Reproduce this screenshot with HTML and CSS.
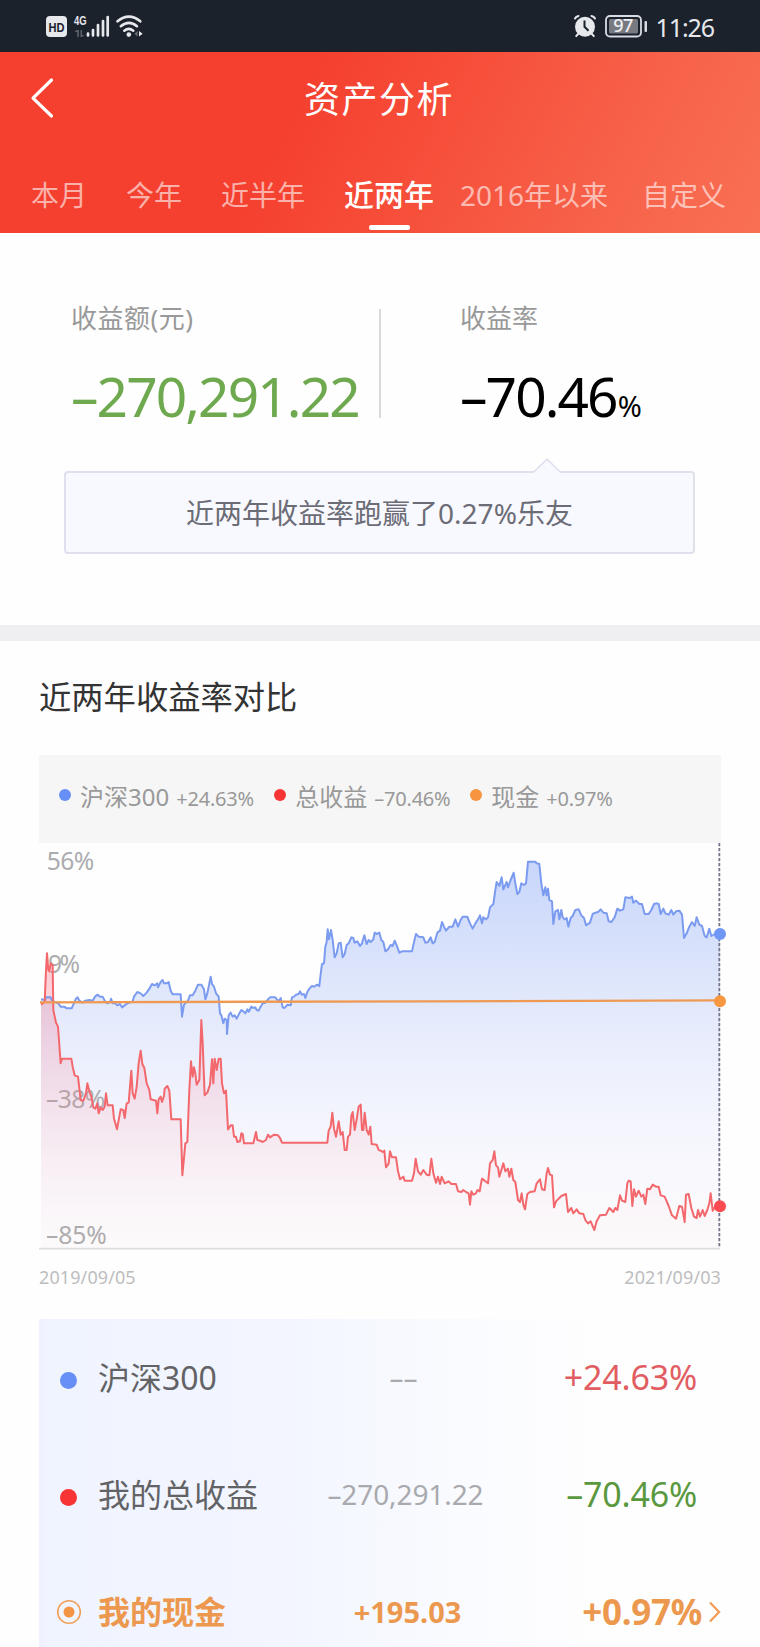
FILE: index.html
```html
<!DOCTYPE html>
<html lang="zh-CN">
<head>
<meta charset="utf-8">
<title>资产分析</title>
<link rel="stylesheet" href="styles.css">
</head>
<body>
<div class="status">
  <svg class="status-left" width="110" height="52" viewBox="40 0 110 52">
    <rect x="46" y="16" width="21" height="21" rx="4" fill="#e6e8ec"/>
    <text class="hd" x="56.5" y="32" text-anchor="middle" textLength="16" lengthAdjust="spacingAndGlyphs">HD</text>
    <text class="net" x="74" y="25" textLength="12.5" lengthAdjust="spacingAndGlyphs">4G</text>
    <path d="M76.3 30l2.6 0v7h-1.700v-5h-2.500zM80.500 30h1.500v5h2.500l-2.500 2h-1.500z" fill="#596069"/>
    <path d="M88 33.500v2M93 30v5.500M98 25v10.500M103 21v14.500M107.700 17v18.500" stroke="#e6e8ec" stroke-width="2.700" stroke-linecap="round"/>
    <g fill="none" stroke="#e6e8ec" stroke-width="2.600" stroke-linecap="round">
      <path d="M117.500 21.300q11.500-9.500 22.800 0M120.800 26.200q8.200-6.800 16.200 0M124.300 30.700q4.500-3.700 9 0"/>
    </g>
    <circle cx="128.800" cy="34.600" r="2.300" fill="#e6e8ec"/>
    <path d="M137.500 31v5.500l-3-2.700z" fill="#6b7179"/><path d="M139 31v5.500l3.700-2.700z" fill="#e6e8ec"/>
  </svg>
  <div class="status-right">
    <svg width="24" height="24" viewBox="572 14 24 24">
      <circle cx="584" cy="26.800" r="10" fill="#e6e8ec"/>
      <path d="M574 18.500q1-2 3.500-2.500M594 18.500q-1-2-3.500-2.500M577.500 33.500l-2.300 2.600M590.500 33.500l2.300 2.600" stroke="#e6e8ec" stroke-width="2" stroke-linecap="round" fill="none"/>
      <path d="M583.500 20.500v6.300l4 4" stroke="#1b222c" stroke-width="2" fill="none"/>
    </svg>
    <svg class="battery" width="44" height="24" viewBox="603 14 44 24">
      <rect x="605" y="16" width="35" height="20.500" rx="4" fill="none" stroke="#d9dbe2" stroke-width="1.800"/>
      <rect x="608" y="19" width="29" height="14.500" rx="1.500" fill="#777a80"/>
      <rect x="643.500" y="21" width="2.500" height="11" rx="1" fill="#d9dbe2"/>
      <text class="pct" x="622" y="32.300" text-anchor="middle">97</text>
    </svg>
    <span class="clock">11:26</span>
  </div>
</div>

<header class="header">
  <div class="nav">
    <svg class="back" width="24" height="42" viewBox="0 0 24 42"><path d="M21.500 3L3 21.200L21.500 39" fill="none" stroke="#fff" stroke-width="3.200" stroke-linecap="round" stroke-linejoin="round"/></svg>
    <h1 class="title">资产分析</h1>
  </div>
  <nav class="tabs">
    <span>本月</span><span>今年</span><span>近半年</span><span class="active">近两年</span><span>2016年以来</span><span>自定义</span>
  </nav>
</header>

<section class="summary">
  <div class="stats">
    <div class="stat stat-amount"><div class="label">收益额(元)</div><div class="value green">–270,291.22</div></div>
    <div class="stat stat-rate"><div class="label">收益率</div><div class="value">–70.46<small>%</small></div></div>
  </div>
  <div class="callout">
    <svg class="pointer" width="30" height="16" viewBox="0 0 30 16"><path d="M1 14.500L15 1L29 14.500V16H1z" fill="#f8f9fe"/><path d="M0 14.300H1.500L15 1.200L28.500 14.300H30" fill="none" stroke="#dfdfee" stroke-width="1.600"/></svg>
    近两年收益率跑赢了0.27%乐友
  </div>
</section>

<section class="compare">
  <h2 class="heading">近两年收益率对比</h2>
  <div class="legend">
    <span class="item"><i class="dot blue"></i>沪深300<b class="w1">+24.63%</b></span>
    <span class="item"><i class="dot red"></i>总收益<b class="w2">–70.46%</b></span>
    <span class="item"><i class="dot orange"></i>现金<b class="w3">+0.97%</b></span>
  </div>
  <svg class="chart" width="682" height="407" viewBox="27 39 2046 1221">
    <defs>
      <linearGradient id="blueFill" gradientUnits="userSpaceOnUse" x1="0" y1="95" x2="0" y2="1257">
        <stop offset="0" stop-color="#c8d6fb"/><stop offset=".35" stop-color="#e1e8fb"/><stop offset=".55" stop-color="#eef1fd"/><stop offset=".78" stop-color="#f8f8fd"/><stop offset="1" stop-color="#fcfcfd"/>
      </linearGradient>
      <linearGradient id="redFill" gradientUnits="userSpaceOnUse" x1="0" y1="370" x2="0" y2="1257">
        <stop offset="0" stop-color="#f8607a" stop-opacity=".34"/><stop offset=".3" stop-color="#fa7088" stop-opacity=".22"/><stop offset=".62" stop-color="#fc8898" stop-opacity=".12"/><stop offset=".85" stop-color="#fca0a8" stop-opacity=".05"/><stop offset="1" stop-color="#faa" stop-opacity=".02"/>
      </linearGradient>
    </defs>
    <path id="blueArea" fill="url(#blueFill)"/>
    <g class="scale">
      <text x="50" y="119" textLength="143">56%</text>
      <text x="54" y="430" textLength="96">9%</text>
      <text x="48" y="835" textLength="178">–38%</text>
      <text x="48" y="1241" textLength="182">–85%</text>
    </g>
    <path id="redArea" fill="url(#redFill)"/>
    <path d="M27 1256H2070" stroke="#dedee0" stroke-width="5"/>
    <path id="blueLine" fill="none" stroke="#7b9bf0" stroke-width="6" stroke-linejoin="round"/>
    <path id="redLine" fill="none" stroke="#f3686d" stroke-width="6" stroke-linejoin="round"/>
    <path d="M30 517L1200 514L2070 511" stroke="#ef9a54" stroke-width="7" fill="none"/>
    <path d="M2068 39V1254" stroke="#77778c" stroke-width="5.500" stroke-dasharray="10 5"/>
    <circle cx="2070" cy="312" r="18" fill="#7197f5"/>
    <circle cx="2070" cy="514" r="18" fill="#f7973f"/>
    <circle cx="2070" cy="1129" r="18" fill="#fb4b50"/>
  </svg>
  <div class="dates"><span>2019/09/05</span><span>2021/09/03</span></div>
</section>

<section class="table">
  <div class="row"><span class="mark"><i class="bullet blue"></i></span><span class="name">沪深300</span><span class="mid dashes">––</span><span class="rate pos">+24.63%</span></div>
  <div class="row"><span class="mark"><i class="bullet red"></i></span><span class="name">我的总收益</span><span class="mid">–270,291.22</span><span class="rate neg">–70.46%</span></div>
  <div class="row cash"><span class="mark"><svg width="26" height="26" viewBox="0 0 26 26"><circle cx="13" cy="13" r="11.300" fill="none" stroke="#f0a05a" stroke-width="1.600"/><circle cx="13" cy="13" r="5.500" fill="#f49545"/></svg></span><span class="name">我的现金</span><span class="mid">+195.03</span><span class="rate">+0.97%</span><svg class="go" width="13" height="22" viewBox="0 0 13 22"><path d="M2 1.500L11 11L2 20.500" fill="none" stroke="#f0a05a" stroke-width="2.400"/></svg></div>
</section>
<script src="chart.js"></script>
</body>
</html>
```

FILE: styles.css
```css
* { box-sizing: border-box; }
body {
  margin: 0;
  width: 760px;
  height: 1647px;
  overflow: hidden;
  background: #fefefe;
  font-family: "Noto Sans", "Noto Sans CJK SC", sans-serif;
  color: #333;
}
svg { display: block; overflow: visible; }
h1, h2 { margin: 0; font-weight: 400; }

.status {
  height: 52px;
  background: #1b222c;
  display: flex;
  justify-content: space-between;
  padding: 0 46px 0 40px;
}
.status-right { display: flex; align-items: center; color: #e6e8ec; }
.battery { margin-left: 7px; }
.clock { font-size: 25px; line-height: 52px; letter-spacing: -1.1px; margin: 1px 0 0 8px; }
.hd { font: 700 13px "Liberation Sans", sans-serif; fill: #1b222c; }
.net { font: 700 13px "Liberation Sans", sans-serif; fill: #e6e8ec; }
.pct { font-size: 18px; font-weight: 500; letter-spacing: -.5px; fill: #f0f0f4; }

.header {
  height: 181px;
  background: linear-gradient(117deg, #f5402f 0%, #f5402f 38%, #f64b37 52%, #f7624a 80%, #f97054 100%);
  color: #fff;
}
.nav { height: 105px; padding: 26px 32px 0 30px; display: grid; grid-template-columns: 24px 1fr 24px; }
.back { margin-top: -1px; }
.title { font-size: 36px; line-height: 42px; letter-spacing: 1.5px; text-align: center; padding-top: 1px; }
.tabs {
  display: grid;
  grid-template-columns: 95px 95px 122px 117px 182px 1fr;
  padding-left: 31px;
  height: 76px;
  font-size: 28px;
  line-height: 76px;
  color: rgba(255, 255, 255, .6);
  white-space: nowrap;
}
.active { font-size: 30px; font-weight: 500; color: #fff; display: flex; flex-direction: column; width: 90px; align-items: center; margin-left: 1px; }
.active::after { content: ""; width: 41px; height: 5px; border-radius: 2px; background: #fff; margin-top: -8px; }

.summary { height: 408px; border-bottom: 16px solid #efeff1; padding: 68px 65px 0 64px; }
.stats { display: grid; grid-template-columns: 317px 1fr; height: 149px; }
.stat-amount { background: linear-gradient(#d9d9db, #d9d9db) right 8px / 2px 109px no-repeat; padding-left: 7px; }
.stat-rate { padding-left: 79px; }
.label { font-size: 26px; line-height: 34px; color: #999; }
.stat-amount .label { letter-spacing: .5px; }
.value { margin-top: 26px; font-size: 55px; line-height: 70px; letter-spacing: -1.9px; color: #000; white-space: nowrap; }
.value small { font-size: 29px; margin-left: 1px; }
.value.green { color: #6fa94f; }
.callout {
  position: relative;
  margin-top: 21px;
  height: 83px;
  border: 2px solid #dfdfee;
  border-radius: 4px;
  background: #f8f9fe;
  text-align: center;
  font-size: 28px;
  line-height: 81px;
  color: #6c6c77;
}
.pointer { position: absolute; left: 466px; top: -15px; }

.compare { padding: 31px 39px 0; }
.heading { font-size: 32.300px; line-height: 48px; }
.legend {
  margin-top: 35px;
  height: 88px;
  background: #f6f6f6;
  display: flex;
  padding: 24px 0 0 20px;
  font-size: 24px;
  line-height: 36px;
  color: #999;
  white-space: nowrap;
}
.item { display: flex; align-items: center; height: 36px; }
.dot { width: 12px; height: 12px; border-radius: 50%; margin: -4px 9px 0 0; }
.item b { font-weight: 400; font-size: 20px; margin: 4px 20px 0 7px; letter-spacing: -.2px; }
.w1 { width: 78px; }
.w2 { width: 76px; }
.blue { background: #688ff5; }
.red { background: #f93434; }
.orange { background: #f79440; }
.scale { font-size: 74px; fill: #acacae; }
.dates { display: flex; justify-content: space-between; margin-top: 14px; font-size: 18px; line-height: 26px; letter-spacing: .1px; color: #bdbdbf; }

.table {
  margin: 29px 39px 0;
  height: 350px;
  background: linear-gradient(90deg, #f0f0ff 0, #f0f4ff 8px, #f3f6ff 38%, #fafbff 62%, #fefefe 84%);
}
.row { display: grid; grid-template-columns: 59px 207px 201px 191px 24px; height: 117px; line-height: 117px; align-items: center; font-size: 32px; color: #636366; }
.mark { display: flex; padding-left: 21px; }
.bullet { width: 17px; height: 17px; border-radius: 50%; margin-top: 5px; }
.cash .mark { padding-left: 17px; }
.mid { text-align: center; font-size: 28px; color: #a9aaae; letter-spacing: -.1px; }
.dashes { letter-spacing: 0; padding-right: 4px; }
.rate { text-align: right; font-size: 34px; letter-spacing: -.2px; white-space: nowrap; }
.pos { color: #e25d62; }
.neg { color: #5a983f; }
.cash, .cash .mid { color: #ec994f; font-weight: 700; }
.cash .mid { font-size: 29px; letter-spacing: 0; padding-left: 4px; }
.cash .rate { font-size: 35px; margin-right: -5px; letter-spacing: -.3px; }
.go { margin-left: 11px; }
```

FILE: chart.js
```js
// Each series is a list of [x offset, "x,y x,y ..."] segments.
const blue = [
  [0, "33,508 45,510 48,502 62,502 66,512 85,520 92,530 103,530 110,535 125,535 130,524 138,506 143,502 148,512 158,518 166,512 178,510 188,512 195,500 203,494 210,500 218,500 224,512 232,520 240,516 243,506 248,520 256,520 262,526 270,522 276,532 284,526 292,520 304,516 308,514 312,500 322,486 332,490 340,498 350,488 358,476 366,462 374,466 382,460 384,472 392,456 398,450 402,460 410,460 416,456 422,482 428,493 452,493 456,560 462,524 474,512 480,496 488,496 496,482 504,464 514,464 522,478 526,508 532,490 538,460 542,440 546,462 552,470 558,490 566,500 570,550 574,556 580,580 584,566 590,570 591,612 596,556 602,548 608,560 614,556 620,566 628,550"],
  [600, "34,540 40,544 46,550 52,538 56,545 64,530 70,534 76,532 80,540 86,542 92,530 98,520 106,518 114,508 120,502 136,502 142,510 148,512 152,504 158,532 164,534 172,524 182,526 186,502 192,500 198,494 206,492 210,484 216,494 222,492 226,504 232,486 238,476 246,468 254,470 260,464 268,468 272,432 276,402 282,400 286,350 290,335 293,298 297,328 303,300 308,330 314,382 320,370 326,340 332,338 338,382 344,372 350,345 356,340 364,322 370,324 374,338 382,334 390,348 396,340 403,316 410,342 416,330 422,336 430,328 434,308 440,312 448,308 454,330 460,336 466,364 474,358 482,345 488,348 494,332 500,346 508,368 516,364 546,364 550,345 558,312 566,320 580,322 586,338 594,336 602,322 608,340 614,336 622,308 630,302 636,276 642,290 648,302 658,290 668,290 676,268 684,290 692,270 698,260 712,260 720,280 728,296 736,280 744,268"],
  [1350, "0,256 6,280 10,262 18,268 24,262 30,232 40,222 46,180 50,156 58,168 65,142 70,178 80,156 84,172 92,150 101,128 106,160 112,192 118,186 124,160 132,165 138,160 144,95 166,95 170,100 178,102 184,160 190,196 196,172 200,196 204,176 208,210 216,214 220,282 226,244 234,240 238,268 244,240 248,262 254,268 260,264 265,290 272,264 278,258 286,240 296,238 304,256 312,264 318,286 330,278 338,252 346,248 354,246 362,238 370,248 380,250 386,274 394,276 404,262 412,236 420,242 430,238 436,202 450,204 456,200 460,218 468,212 478,222 486,222 494,252 506,252 514,240 522,222 530,220 536,222 542,252 550,236 556,250 566,254 574,240 580,254 588,244 598,242 606,254 612,324 620,310 628,290 636,276 644,288 650,262 658,284 666,288 674,318 680,322 688,296 694,318 704,312 720,312"]
];
const red = [
  [0, "33,524 44,516 48,420 51,370 55,420 58,424 62,400 68,405 70,540 78,578 84,590 92,700 96,686 124,686 128,710 134,736 144,740 152,810 160,812 168,790 172,760 178,784 184,800 190,832 196,836 202,820 206,850 212,832 218,840 224,830 228,790 233,826 248,826 252,866 256,880 261,898 268,860 272,838 280,840 284,864 290,820 296,818 304,722 308,790 314,806 320,770 326,700 332,662 337,702 343,714 350,760 358,780 362,808 378,812 382,850 386,808 392,800 396,816 402,798 404,776 412,768 418,782 424,868 452,868 457,1036 466,940 472,936 478,780 483,694 488,740 492,712 496,730 500,764 508,750 514,570 518,640 524,796 532,788 540,764 546,688 550,760 554,686 560,720 566,686 572,686 576,760 582,790 588,782 594,898 602,886"],
  [600, "8,886 12,920 18,920 22,936 30,934 34,910 38,912 42,940 70,940 76,914 78,906 82,930 90,932 98,936 108,930 114,914 120,922 132,914 144,916 150,924 156,938 292,938 296,902 302,890 307,848 312,896 318,920 326,874 332,914 338,906 344,960 350,960 354,920 360,914 364,858 368,846 374,900 380,868 386,830 392,824 396,900 400,900 404,848 410,900 416,914 421,890 425,942 440,944 446,960 452,962 458,966 463,962 468,1012 476,1000 480,964 486,982 498,982 504,1024 510,1048 520,1040 524,1052 546,1052 552,1030 557,986 564,1024 572,1034 580,1020 590,1034 598,1036 604,986 610,1030 618,1058 624,1040 630,1062 635,1040 644,1060 656,1054 664,1062 678,1062 684,1084 694,1086 700,1080 708,1086 716,1090 720,1124 724,1084 730,1094 738,1090 742,1080 749,1084"],
  [1350, "2,1066 6,1046 14,1052 24,1060 30,1000 38,990 43,964 48,1006 54,1012 58,1040 64,1020 70,1000 76,1024 84,1016 88,1040 94,1016 100,1050 106,1056 114,1110 120,1116 125,1090 130,1124 135,1138 142,1092 150,1086 164,1084 170,1060 180,1048 186,1078 194,1080 200,1030 204,1014 210,1034 216,1036 222,1132 228,1114 244,1098 258,1092 264,1146 274,1134 280,1150 290,1138 298,1150 310,1152 316,1170 324,1180 332,1174 343,1200 350,1174 360,1156 378,1154 388,1134 400,1146 406,1134 412,1140 420,1096 426,1112 436,1116 442,1060 446,1052 452,1054 457,1128 462,1078 468,1100 476,1082 484,1100 490,1094 496,1122 502,1076 510,1078 518,1064 528,1070 536,1070 542,1096 554,1100 566,1128 576,1156 588,1166 598,1128 606,1130 614,1176 618,1094 626,1092 634,1134 642,1160 650,1164 654,1140 660,1160 668,1140 674,1158 682,1140 688,1120 692,1090 698,1142 706,1128 720,1130"]
];

function draw(name, segments) {
  const points = segments.flatMap(([dx, text]) =>
    text.split(" ").map(p => {
      const [x, y] = p.split(",").map(Number);
      return (x + dx) + " " + y;
    }));
  const line = "M" + points.join("L");
  document.getElementById(name + "Line").setAttribute("d", line);
  document.getElementById(name + "Area").setAttribute("d", line + "V1257H33Z");
}

draw("blue", blue);
draw("red", red);
```
